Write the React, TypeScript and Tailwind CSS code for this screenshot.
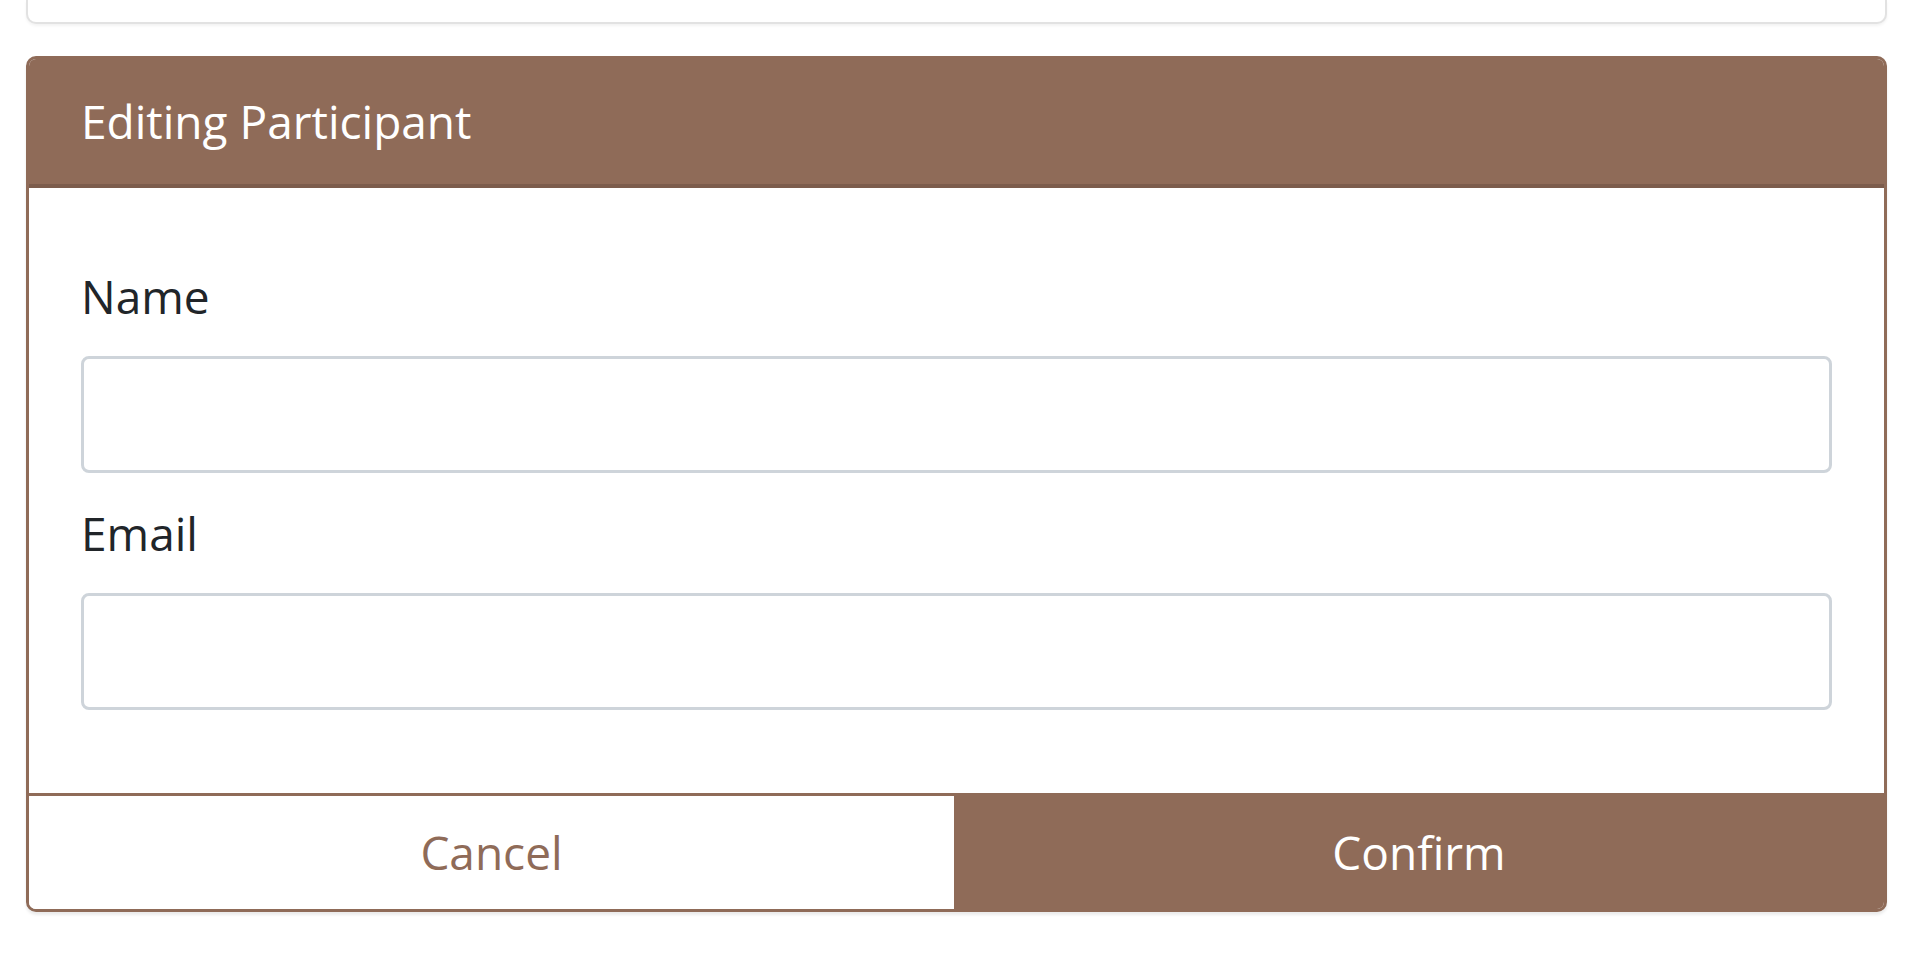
import React, { useState } from 'react';

const EditParticipant: React.FC = () => {
  const [name, setName] = useState('');
  const [email, setEmail] = useState('');

  return (
    <div className="overflow-hidden rounded-[10px] border-[3px] border-[#8f6b58] bg-white shadow-[0_3px_3px_rgba(0,0,0,0.08)]">
      <div className="flex h-[129px] items-center border-b-4 border-[#7c5c4c] bg-[#8f6b58] px-[52px]">
        <h5 className="text-[46px] font-normal leading-[1.5] text-white">Editing Participant</h5>
      </div>

      <form className="px-[52px] pt-[72px] pb-[83px]" onSubmit={(e) => e.preventDefault()}>
        <div className="mb-[24px]">
          <label className="mb-[24px] block text-[46px] leading-[72px] text-[#212529]">Name</label>
          <input
            value={name}
            onChange={(e) => setName(e.target.value)}
            className="block h-[117px] w-full rounded-[8px] border-[3px] border-[#ced4da] bg-white px-[36px] text-[46px] text-[#495057] outline-none"
          />
        </div>
        <div>
          <label className="mb-[24px] block text-[46px] leading-[72px] text-[#212529]">Email</label>
          <input
            value={email}
            onChange={(e) => setEmail(e.target.value)}
            className="block h-[117px] w-full rounded-[8px] border-[3px] border-[#ced4da] bg-white px-[36px] text-[46px] text-[#495057] outline-none"
          />
        </div>
      </form>

      <div className="flex border-t-[3px] border-[#8f6b58]">
        <button className="flex h-[113px] w-[925px] items-center justify-center bg-white text-[46px] text-[#8f6b58]">
          Cancel
        </button>
        <button className="flex h-[113px] flex-1 items-center justify-center bg-[#8f6b58] text-[46px] text-white">
          Confirm
        </button>
      </div>
    </div>
  );
};

export default function App() {
  return (
    <div className="min-h-screen bg-white pl-[26px] pr-[33px] font-['Open_Sans',sans-serif]">
      <div className="h-[24px] rounded-b-[10px] border-x-2 border-b-2 border-[#e2e2e2] bg-white shadow-[0_2px_3px_rgba(0,0,0,0.05)]" />
      <div className="mt-[32px]">
        <EditParticipant />
      </div>
    </div>
  );
}
